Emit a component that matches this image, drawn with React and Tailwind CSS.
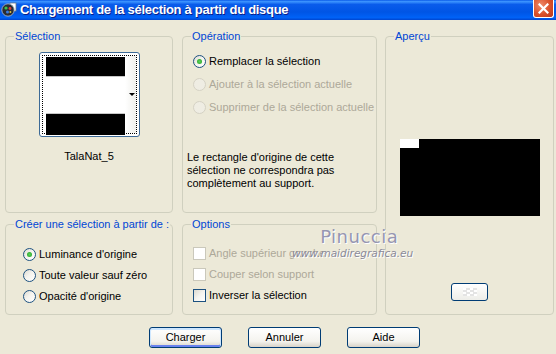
import clsx from "clsx";

const Radio = ({ checked, disabled, label }) => (
  <div className="flex h-[16px] items-center">
    <span
      className={clsx(
        "flex h-[13px] w-[13px] items-center justify-center rounded-full border",
        disabled
          ? "border-[#D5D2C4] bg-[#EFEDE3]"
          : "border-[#1C5180] bg-[linear-gradient(135deg,#DCD9CF_0%,#F4F3EE_45%,#FFFFFF_100%)]"
      )}
    >
      {checked && (
        <span className="h-[5px] w-[5px] rounded-full bg-[radial-gradient(circle,#5BD05B,#21A121)]" />
      )}
    </span>
    <span className={clsx("ml-[3px]", disabled ? "text-[#ACA899]" : "text-black")}>
      {label}
    </span>
  </div>
);

const Checkbox = ({ disabled, label }) => (
  <div className="flex h-[16px] items-center">
    <span
      className={clsx(
        "h-[13px] w-[13px] border",
        disabled
          ? "border-[#CAC8BB] bg-white"
          : "border-[#1C5180] bg-[linear-gradient(135deg,#DCD9CF_0%,#F4F3EE_50%,#FFFFFF_100%)]"
      )}
    />
    <span className={clsx("ml-[3px]", disabled ? "text-[#ACA899]" : "text-black")}>
      {label}
    </span>
  </div>
);

const Group = ({ title, className, children }) => (
  <fieldset className={clsx("rounded-[4px] border border-[#D0D0BF]", className)}>
    <legend className="ml-[8px] px-[1px] leading-[13px] text-[#0046D5]">{title}</legend>
    {children}
  </fieldset>
);

const PushButton = ({ label, isDefault }) => (
  <button
    className={clsx(
      "h-[21px] w-[73px] rounded-[3px] border border-[#003C74] bg-[linear-gradient(to_bottom,#FFFFFF_0%,#F4F3EE_70%,#D8D3C8_100%)] text-black",
      isDefault && "shadow-[inset_0_1px_0_1px_#CEE7FF,inset_0_-1px_0_1px_#6982EE]"
    )}
  >
    {label}
  </button>
);

const AppIcon = () => (
  <svg width="16" height="16" viewBox="0 0 16 16">
    <rect x="9" y="1" width="6" height="8" fill="#fff" stroke="#6d7a8a" strokeWidth="0.8" />
    <circle cx="7" cy="8" r="6.2" fill="#2a2d33" stroke="#b6c3d6" strokeWidth="0.8" />
    <circle cx="5" cy="6" r="1.6" fill="#3fc24a" />
    <circle cx="9" cy="6.5" r="1.4" fill="#d83b3b" />
    <circle cx="6.5" cy="10" r="1.5" fill="#3b7be0" />
    <circle cx="9.4" cy="10" r="1" fill="#e0c23b" />
  </svg>
);

export default function App() {
  return (
    <div className="h-[354px] w-[556px] overflow-hidden bg-[#ECE9D8] font-['Liberation_Sans',Tahoma,sans-serif] text-[11px] text-black">
      {/* title bar */}
      <div className="flex h-[20px] items-center bg-[linear-gradient(to_bottom,#0A5AE8_0%,#3D95FF_8%,#0A5CEB_22%,#0055E5_60%,#0062F7_88%,#0045CF_100%)]">
        <div className="ml-[1px]">
          <AppIcon />
        </div>
        <span className="ml-[3px] text-[13px] leading-[16px] font-bold tracking-[-0.3px] text-white [text-shadow:1px_1px_#0A1E8A]">
          Chargement de la sélection à partir du disque
        </span>
        <div className="ml-auto mr-[2px] flex h-[18px] w-[21px] self-start items-center justify-center rounded-b-[3px] border border-t-0 border-white bg-[radial-gradient(circle_at_35%_30%,#F08A6A,#D9502A_55%,#B8381C)]">
          <svg width="11" height="11" viewBox="0 0 11 11">
            <path d="M1.5 1.5 L9.5 9.5 M9.5 1.5 L1.5 9.5" stroke="#fff" strokeWidth="2.2" strokeLinecap="square" />
          </svg>
        </div>
      </div>

      <div className="relative pt-[10px]">
        <div className="flex pl-[5px]">
          {/* left column */}
          <div className="flex w-[168px] flex-col gap-[5px]">
            <Group title="Sélection" className="h-[183px]">
              <div className="mx-auto mt-[9px] h-[85px] w-[101px] rounded-[3px] border border-[#3D6A96] bg-white p-[2px]">
                <div className="flex h-full border border-dotted border-black">
                  <div className="ml-[3px] mt-[1px] flex h-[78px] w-[79px] flex-col">
                    <div className="h-[19px] bg-black" />
                    <div className="h-[38px] border-y border-[#C8C8C8] bg-white" />
                    <div className="h-[21px] bg-black" />
                  </div>
                  <div className="relative flex-1 bg-[linear-gradient(to_right,#FFFFFF,#F0F0EC)]">
                    <div className="absolute right-[1px] top-[37px] h-0 w-0 border-x-[3px] border-t-[3px] border-x-transparent border-t-black" />
                  </div>
                </div>
              </div>
              <div className="mt-[13px] text-center leading-[13px]">TalaNat_5</div>
            </Group>
            <Group title="Créer une sélection à partir de :" className="h-[97px]">
              <div className="mt-[15px] flex flex-col gap-[5px] pl-[17px]">
                <Radio checked label="Luminance d'origine" />
                <Radio label="Toute valeur sauf zéro" />
                <Radio label="Opacité d'origine" />
              </div>
            </Group>
          </div>

          {/* middle column */}
          <div className="ml-[9px] flex w-[195px] flex-col gap-[5px]">
            <Group title="Opération" className="h-[183px]">
              <div className="mt-[10px] flex flex-col gap-[7px] pl-[10px]">
                <Radio checked label="Remplacer la sélection" />
                <Radio disabled label="Ajouter à la sélection actuelle" />
                <Radio disabled label="Supprimer de la sélection actuelle" />
              </div>
              <p className="mt-[36px] pl-[4px] leading-[13px]">
                Le rectangle d'origine de cette
                <br />
                sélection ne correspondra pas
                <br />
                complètement au support.
              </p>
            </Group>
            <Group title="Options" className="h-[97px]">
              <div className="mt-[14px] flex flex-col gap-[5px] pl-[10px]">
                <Checkbox disabled label="Angle supérieur gauche" />
                <Checkbox disabled label="Couper selon support" />
                <Checkbox label="Inverser la sélection" />
              </div>
            </Group>
          </div>

          {/* right column */}
          <div className="ml-[8px] w-[169px]">
            <Group title="Aperçu" className="flex h-[285px] flex-col items-center">
              <div className="mt-[96px] h-[77px] w-[140px] bg-black">
                <div className="h-[9px] w-[19px] bg-white" />
              </div>
              <div className="mt-[67px] flex h-[18px] w-[37px] items-center justify-center rounded-[3px] border border-[#003C74] bg-[linear-gradient(to_bottom,#FFFFFF,#EDEDE8)]">
                <div className="h-[8px] w-[14px] bg-[conic-gradient(#E4E4E4_25%,#FFFFFF_0_50%,#E4E4E4_0_75%,#FFFFFF_0)] bg-[length:7px_4px]" />
              </div>
            </Group>
          </div>
        </div>

        {/* buttons */}
        <div className="mt-[12px] flex gap-[26px] pl-[149px]">
          <PushButton isDefault label="Charger" />
          <PushButton label="Annuler" />
          <PushButton label="Aide" />
        </div>

        {/* watermark */}
        <div className="pointer-events-none absolute left-[292px] top-[207px] flex flex-col items-end">
          <span className="mr-[15px] font-['DejaVu_Sans',sans-serif] text-[18px] leading-[20px] tracking-[0.5px] text-[#9696B2] [text-shadow:1px_1px_#FFFFFF]">
            Pinuccia
          </span>
          <span className="font-['DejaVu_Sans',sans-serif] text-[10.5px] leading-[12px] italic text-[#8A8A98] [text-shadow:1px_1px_#FFFFFF]">
            www.maidiregrafica.eu
          </span>
        </div>
      </div>
    </div>
  );
}
